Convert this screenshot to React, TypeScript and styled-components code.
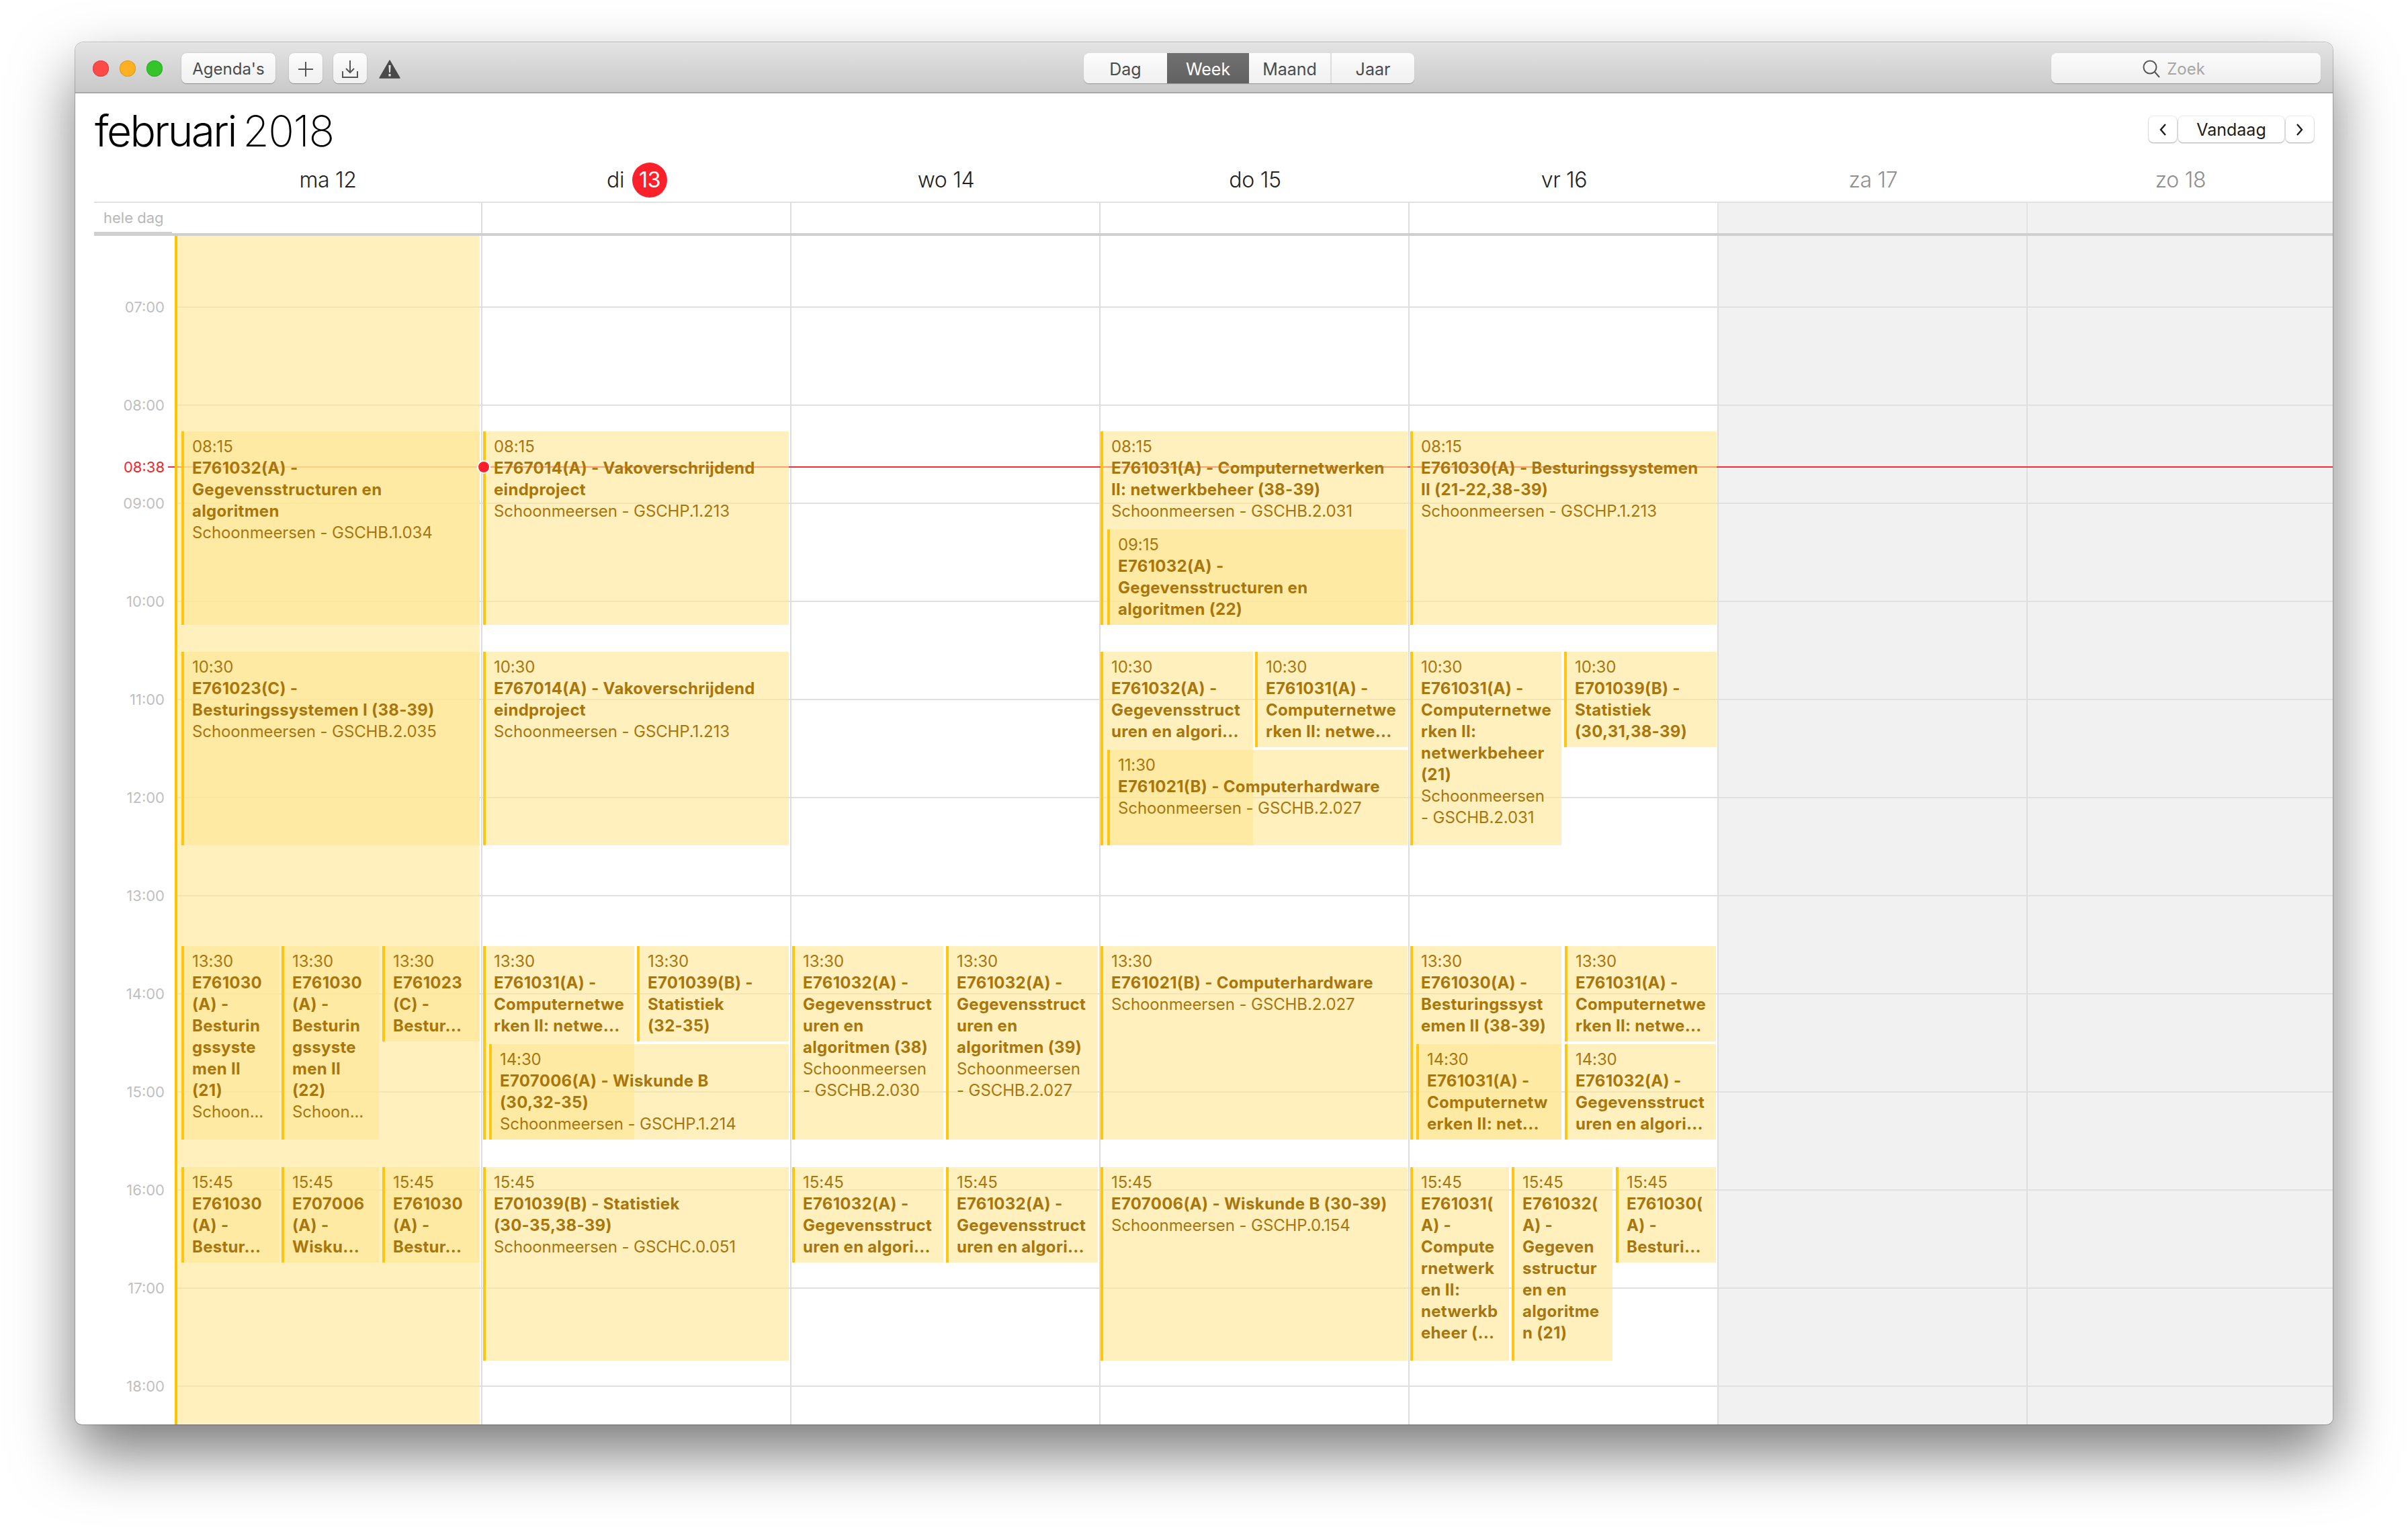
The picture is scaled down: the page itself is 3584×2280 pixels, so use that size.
import React from 'react'
import styled, { createGlobalStyle } from 'styled-components'

const HOUR = 146
// y of 00:00 measured from the top of the scrolling grid (grid starts at y=352 on the page)
const GRID_TOP = 352
const DAY_ZERO = 2063 - 18 * HOUR

type CalEvent = {
    from: string
    to: string
    left: number
    right: number
    title: string[]
    place?: string[]
}

type Day = {
    label: string
    num: string
    x: number
    events: CalEvent[]
}

const toY = (t: string, extra = 0) => {
    const [h, m] = t.split(':').map(Number)
    return Math.round(DAY_ZERO + (h + m / 60) * HOUR + extra)
}

const days: Day[] = [
    {
        label: 'ma',
        num: '12',
        x: 257,
        events: [
            { from: '08:15', to: '10:15', left: 270, right: 714, title: ['E761032(A) -', 'Gegevensstructuren en', 'algoritmen'], place: ['Schoonmeersen - GSCHB.1.034'] },
            { from: '10:30', to: '12:30', left: 270, right: 714, title: ['E761023(C) -', 'Besturingssystemen I (38-39)'], place: ['Schoonmeersen - GSCHB.2.035'] },
            { from: '13:30', to: '15:30', left: 270, right: 416, title: ['E761030', '(A) -', 'Besturin', 'gssyste', 'men II', '(21)'], place: ['Schoon...'] },
            { from: '13:30', to: '15:30', left: 419, right: 564, title: ['E761030', '(A) -', 'Besturin', 'gssyste', 'men II', '(22)'], place: ['Schoon...'] },
            { from: '13:30', to: '14:30', left: 569, right: 714, title: ['E761023', '(C) -', 'Bestur...'] },
            { from: '15:45', to: '16:45', left: 270, right: 416, title: ['E761030', '(A) -', 'Bestur...'] },
            { from: '15:45', to: '16:45', left: 419, right: 564, title: ['E707006', '(A) -', 'Wisku...'] },
            { from: '15:45', to: '16:45', left: 569, right: 714, title: ['E761030', '(A) -', 'Bestur...'] }
        ]
    },
    {
        label: 'di',
        num: '13',
        x: 717,
        events: [
            { from: '08:15', to: '10:15', left: 719, right: 1174, title: ['E767014(A) - Vakoverschrijdend', 'eindproject'], place: ['Schoonmeersen - GSCHP.1.213'] },
            { from: '10:30', to: '12:30', left: 719, right: 1174, title: ['E767014(A) - Vakoverschrijdend', 'eindproject'], place: ['Schoonmeersen - GSCHP.1.213'] },
            { from: '13:30', to: '15:30', left: 719, right: 944, title: ['E761031(A) -', 'Computernetwe', 'rken II: netwe...'] },
            { from: '13:30', to: '14:30', left: 948, right: 1174, title: ['E701039(B) -', 'Statistiek', '(32-35)'] },
            { from: '14:30', to: '15:30', left: 728, right: 1174, title: ['E707006(A) - Wiskunde B', '(30,32-35)'], place: ['Schoonmeersen - GSCHP.1.214'] },
            { from: '15:45', to: '17:45', left: 719, right: 1174, title: ['E701039(B) - Statistiek', '(30-35,38-39)'], place: ['Schoonmeersen - GSCHC.0.051'] }
        ]
    },
    {
        label: 'wo',
        num: '14',
        x: 1177,
        events: [
            { from: '13:30', to: '15:30', left: 1179, right: 1404, title: ['E761032(A) -', 'Gegevensstruct', 'uren en', 'algoritmen (38)'], place: ['Schoonmeersen', '- GSCHB.2.030'] },
            { from: '13:30', to: '15:30', left: 1408, right: 1634, title: ['E761032(A) -', 'Gegevensstruct', 'uren en', 'algoritmen (39)'], place: ['Schoonmeersen', '- GSCHB.2.027'] },
            { from: '15:45', to: '16:45', left: 1179, right: 1404, title: ['E761032(A) -', 'Gegevensstruct', 'uren en algori...'] },
            { from: '15:45', to: '16:45', left: 1408, right: 1634, title: ['E761032(A) -', 'Gegevensstruct', 'uren en algori...'] }
        ]
    },
    {
        label: 'do',
        num: '15',
        x: 1637,
        events: [
            { from: '08:15', to: '10:15', left: 1638, right: 2095, title: ['E761031(A) - Computernetwerken', 'II: netwerkbeheer (38-39)'], place: ['Schoonmeersen - GSCHB.2.031'] },
            { from: '09:15', to: '10:15', left: 1648, right: 2093, title: ['E761032(A) -', 'Gegevensstructuren en', 'algoritmen (22)'] },
            { from: '10:30', to: '12:30', left: 1638, right: 1865, title: ['E761032(A) -', 'Gegevensstruct', 'uren en algori...'] },
            { from: '10:30', to: '11:30', left: 1868, right: 2095, title: ['E761031(A) -', 'Computernetwe', 'rken II: netwe...'] },
            { from: '11:30', to: '12:30', left: 1648, right: 2095, title: ['E761021(B) - Computerhardware'], place: ['Schoonmeersen - GSCHB.2.027'] },
            { from: '13:30', to: '15:30', left: 1638, right: 2095, title: ['E761021(B) - Computerhardware'], place: ['Schoonmeersen - GSCHB.2.027'] },
            { from: '15:45', to: '17:45', left: 1638, right: 2095, title: ['E707006(A) - Wiskunde B (30-39)'], place: ['Schoonmeersen - GSCHP.0.154'] }
        ]
    },
    {
        label: 'vr',
        num: '16',
        x: 2097,
        events: [
            { from: '08:15', to: '10:15', left: 2099, right: 2555, title: ['E761030(A) - Besturingssystemen', 'II (21-22,38-39)'], place: ['Schoonmeersen - GSCHP.1.213'] },
            { from: '10:30', to: '12:30', left: 2099, right: 2324, title: ['E761031(A) -', 'Computernetwe', 'rken II:', 'netwerkbeheer', '(21)'], place: ['Schoonmeersen', '- GSCHB.2.031'] },
            { from: '10:30', to: '11:30', left: 2328, right: 2555, title: ['E701039(B) -', 'Statistiek', '(30,31,38-39)'] },
            { from: '13:30', to: '15:30', left: 2099, right: 2324, title: ['E761030(A) -', 'Besturingssyst', 'emen II (38-39)'] },
            { from: '13:30', to: '14:30', left: 2329, right: 2554, title: ['E761031(A) -', 'Computernetwe', 'rken II: netwe...'] },
            { from: '14:30', to: '15:30', left: 2108, right: 2324, title: ['E761031(A) -', 'Computernetw', 'erken II: net...'] },
            { from: '14:30', to: '15:30', left: 2329, right: 2554, title: ['E761032(A) -', 'Gegevensstruct', 'uren en algori...'] },
            { from: '15:45', to: '17:45', left: 2099, right: 2246, title: ['E761031(', 'A) -', 'Compute', 'rnetwerk', 'en II:', 'netwerkb', 'eheer (...'] },
            { from: '15:45', to: '17:45', left: 2250, right: 2400, title: ['E761032(', 'A) -', 'Gegeven', 'sstructur', 'en en', 'algoritme', 'n (21)'] },
            { from: '15:45', to: '16:45', left: 2405, right: 2554, title: ['E761030(', 'A) -', 'Besturi...'] }
        ]
    },
    { label: 'za', num: '17', x: 2557, events: [] },
    { label: 'zo', num: '18', x: 3017, events: [] }
]

const hours = ['07', '08', '09', '10', '11', '12', '13', '14', '15', '16', '17', '18']

// same tint stacks up when events overlap, and lets the grid lines and the red line show through
const EVENT_FILL = 'rgba(255, 231, 148, 0.62)'

const GlobalStyle = createGlobalStyle`
    html, body {
        margin: 0;
        background: #fff;
    }
    body {
        font-family: Inter, 'Liberation Sans', sans-serif;
        -webkit-font-smoothing: antialiased;
    }
`

const Page = styled.div`
    width: 3584px;
    height: 2280px;
    padding: 63px 112px 0;
    box-sizing: border-box;
    overflow: hidden;
`

const Win = styled.div`
    width: 3360px;
    height: 2057px;
    display: flex;
    flex-direction: column;
    overflow: hidden;
    background: #fff;
    border-radius: 12px 12px 10px 10px;
    box-shadow: 0 44px 90px rgba(0, 0, 0, 0.52), 0 0 0 1px rgba(0, 0, 0, 0.22);
`

const TitleBar = styled.div`
    position: relative;
    flex: none;
    height: 76px;
    box-sizing: border-box;
    display: flex;
    align-items: center;
    padding: 2px 18px 0 26px;
    background: linear-gradient(#e3e3e3, #c9c9c9);
    border-top: 1px solid #eee;
    border-bottom: 2px solid #a9a9a9;
`

const Lights = styled.div`
    display: flex;
    gap: 16px;
    margin-right: 28px;
`

const Light = styled.span<{ $fill: string; $edge: string }>`
    width: 24px;
    height: 24px;
    border-radius: 50%;
    background: ${(p) => p.$fill};
    box-shadow: inset 0 0 0 1px ${(p) => p.$edge};
`

const ToolButton = styled.div<{ $w: number; $gap?: number }>`
    width: ${(p) => p.$w}px;
    height: 45px;
    margin-right: ${(p) => p.$gap ?? 0}px;
    display: flex;
    align-items: center;
    justify-content: center;
    box-sizing: border-box;
    padding-top: 2px;
    border-radius: 8px;
    background: linear-gradient(#fcfcfc, #f0f0f0);
    box-shadow: 0 1px 1px rgba(0, 0, 0, 0.28), 0 0 0 1px rgba(0, 0, 0, 0.04);
    color: #4b4b4b;
    font-size: 24px;
`

const Warn = styled.svg`
    width: 32px;
    height: 28px;
    margin-left: 18px;
    margin-top: 2px;
`

const Segments = styled.div`
    position: absolute;
    left: 1501px;
    top: 15px;
    display: flex;
    height: 45px;
    border-radius: 8px;
    overflow: hidden;
    background: linear-gradient(#fcfcfc, #f0f0f0);
    box-shadow: 0 1px 1px rgba(0, 0, 0, 0.28);
`

const Segment = styled.div<{ $w: number; $on?: boolean; $line?: boolean }>`
    width: ${(p) => p.$w}px;
    display: flex;
    align-items: center;
    justify-content: center;
    padding-top: 2px;
    font-size: 25px;
    box-sizing: border-box;
    color: ${(p) => (p.$on ? '#fff' : '#4b4b4b')};
    background: ${(p) => (p.$on ? 'linear-gradient(#707070, #626262)' : 'none')};
    border-left: ${(p) => (p.$line ? '2px solid #dcdcdc' : 'none')};
`

const Search = styled.div`
    margin-left: auto;
    width: 401px;
    height: 45px;
    box-sizing: border-box;
    display: flex;
    align-items: center;
    justify-content: center;
    gap: 10px;
    padding: 2px 36px 0 0;
    border-radius: 8px;
    background: linear-gradient(#fbfbfb, #efefef);
    box-shadow: 0 1px 1px rgba(0, 0, 0, 0.28);
    color: #a6a6a6;
    font-size: 24px;
`

const Top = styled.div`
    flex: none;
    height: 97px;
    display: flex;
    align-items: flex-start;
    justify-content: space-between;
    padding: 0 28px 0 29px;
`

const Month = styled.h1`
    margin: 16px 0 0;
    font-size: 64px;
    line-height: 80px;
    font-weight: 300;
    color: #000;
    letter-spacing: -2.6px;
    span {
        margin-left: -5px;
        font-weight: 150;
        letter-spacing: -1.4px;
    }
`

const Nav = styled.div`
    display: flex;
    gap: 2px;
    margin-top: 34px;
`

const NavButton = styled.div<{ $w: number }>`
    width: ${(p) => p.$w}px;
    height: 39px;
    display: flex;
    align-items: center;
    justify-content: center;
    border-radius: 7px;
    background: #fff;
    box-shadow: 0 1px 2px rgba(0, 0, 0, 0.3), 0 0 0 1px rgba(0, 0, 0, 0.06);
    color: #1d1d1d;
    font-size: 25px;
`

const DayHeads = styled.div`
    flex: none;
    height: 64px;
    display: grid;
    grid-template-columns: 145px repeat(6, 460px) 455px;
    align-items: center;
`

const DayHead = styled.div<{ $muted?: boolean }>`
    display: flex;
    align-items: center;
    justify-content: center;
    gap: 12px;
    height: 64px;
    padding: 0 0 1px 2px;
    box-sizing: border-box;
    font-size: 32px;
    font-weight: 300;
    color: ${(p) => (p.$muted ? '#8f8f8f' : '#222')};
    letter-spacing: -0.3px;
`

const TodayBadge = styled.span`
    width: 52px;
    height: 52px;
    border-radius: 50%;
    background: #fb2029;
    color: #fff;
    display: flex;
    align-items: center;
    justify-content: center;
    font-weight: 400;
`

const AllDay = styled.div`
    flex: none;
    margin-left: 28px;
    height: 51px;
    box-sizing: border-box;
    display: grid;
    grid-template-columns: 117px repeat(6, 460px) 455px;
    border-top: 2px solid #e2e2e2;
    border-bottom: 6px solid #cfcfcf;
`

const AllDayLabel = styled.div`
    font-size: 22px;
    line-height: 45px;
    color: #b8b8b8;
    padding-left: 14px;
    white-space: nowrap;
`

const AllDayCell = styled.div<{ $weekend?: boolean; $first?: boolean }>`
    background: ${(p) => (p.$weekend ? '#f1f1f1' : '#fff')};
    border-left: 2px solid ${(p) => (p.$first ? 'transparent' : p.$weekend ? '#e4e4e4' : '#dedede')};
    margin-left: -1px;
`

const Grid = styled.div`
    position: relative;
    flex: 1;
    min-height: 0;
    overflow: hidden;
    display: grid;
    grid-template-columns: 145px repeat(6, 460px) 455px;
`

const Gutter = styled.div`
    position: relative;
`

const HourLabel = styled.div`
    position: absolute;
    right: 12px;
    height: 30px;
    line-height: 30px;
    font-size: 22px;
    color: #bfbfc1;
`

const NowLabel = styled(HourLabel)`
    color: #fb1f2c;
    background: #fff;
    padding-left: 6px;
    z-index: 3;
`

const DayCol = styled.div<{ $weekend?: boolean; $first?: boolean }>`
    position: relative;
    margin-left: -1px;
    border-left: 2px solid ${(p) => (p.$first ? 'transparent' : '#dedede')};
    background: ${(p) => (p.$weekend ? '#f1f1f1' : 'transparent')};
`

const Rule = styled.div<{ $inset?: boolean }>`
    position: absolute;
    left: ${(p) => (p.$inset ? 2 : 0)}px;
    right: 0;
    height: 2px;
    background: #e0e0e0;
`

const NowTick = styled.div`
    position: absolute;
    height: 2px;
    background: #fb2a34;
`

const NowDot = styled.div`
    position: absolute;
    width: 20px;
    height: 20px;
    box-sizing: border-box;
    border: 2px solid #fff;
    border-radius: 50%;
    background: #fb1f2c;
    z-index: 4;
`

const Backdrop = styled.div`
    position: absolute;
    left: 2px;
    right: 3px;
    top: 0;
    bottom: 0;
    border-left: 4px solid #ffc400;
    background: ${EVENT_FILL};
`

const EventBox = styled.div`
    position: absolute;
    box-sizing: border-box;
    padding: 7px 0 0 12px;
    border-left: 4px solid #ffc511;
    background: ${EVENT_FILL};
    overflow: hidden;
    color: #a9760c;
    font-size: 24px;
    line-height: 32px;
    white-space: nowrap;
    z-index: 2;
`

const EventLine = styled.div<{ $bold?: boolean }>`
    font-weight: ${(p) => (p.$bold ? 700 : 400)};
    letter-spacing: ${(p) => (p.$bold ? '0.3px' : '-0.1px')};
`

function Event({ ev, dayX }: { ev: CalEvent; dayX: number }) {
    const top = toY(ev.from, 3) - GRID_TOP
    const bottom = toY(ev.to, -1) - GRID_TOP
    return (
        <EventBox style={{ top, height: bottom - top, left: ev.left - dayX - 1, width: ev.right - ev.left }}>
            <EventLine>{ev.from}</EventLine>
            {ev.title.map((t, i) => (
                <EventLine $bold key={i}>
                    {t}
                </EventLine>
            ))}
            {ev.place?.map((t, i) => <EventLine key={i}>{t}</EventLine>)}
        </EventBox>
    )
}

export default function App() {
    const nowY = toY('08:38') - GRID_TOP
    return (
        <Page>
            <GlobalStyle />
            <Win>
                <TitleBar>
                    <Lights>
                        <Light $fill="#fc4a48" $edge="#e0403e" />
                        <Light $fill="#fdb122" $edge="#df9a1a" />
                        <Light $fill="#35c42a" $edge="#2dab24" />
                    </Lights>
                    <ToolButton $w={140} $gap={20}>
                        Agenda's
                    </ToolButton>
                    <ToolButton $w={50} $gap={16}>
                        <svg width="24" height="24" viewBox="0 0 24 24" fill="none" stroke="#555" strokeWidth="2">
                            <path d="M12 1v22M1 12h22" />
                        </svg>
                    </ToolButton>
                    <ToolButton $w={50}>
                        <svg width="24" height="28" viewBox="0 0 24 28" fill="none" stroke="#555" strokeWidth="2">
                            <path d="M12 1v18M6 13l6 6 6-6M1 17v9h22v-9" />
                        </svg>
                    </ToolButton>
                    <Warn viewBox="0 0 32 28">
                        <path d="M16 1l15 26H1z" fill="#4a4a4a" stroke="#4a4a4a" strokeLinejoin="round" strokeWidth="1.5" />
                        <path d="M14.4 8h3.2l-.7 11h-1.8zM14.4 21h3.2v3.4h-3.2z" fill="#e4e4e4" />
                    </Warn>
                    <Segments>
                        <Segment $w={124}>Dag</Segment>
                        <Segment $w={122} $on>
                            Week
                        </Segment>
                        <Segment $w={121}>Maand</Segment>
                        <Segment $w={125} $line>
                            Jaar
                        </Segment>
                    </Segments>
                    <Search>
                        <svg width="26" height="28" viewBox="0 0 26 28" fill="none" stroke="#555" strokeWidth="2">
                            <circle cx="11" cy="11" r="9.5" />
                            <path d="M18 18l7 8" />
                        </svg>
                        Zoek
                    </Search>
                </TitleBar>

                <Top>
                    <Month>
                        februari <span>2018</span>
                    </Month>
                    <Nav>
                        <NavButton $w={42}>
                            <svg width="12" height="20" viewBox="0 0 12 20" fill="none" stroke="#1d1d1d" strokeWidth="2.4">
                                <path d="M10 2L3 10l7 8" />
                            </svg>
                        </NavButton>
                        <NavButton $w={158}>Vandaag</NavButton>
                        <NavButton $w={42}>
                            <svg width="12" height="20" viewBox="0 0 12 20" fill="none" stroke="#1d1d1d" strokeWidth="2.4">
                                <path d="M2 2l7 8-7 8" />
                            </svg>
                        </NavButton>
                    </Nav>
                </Top>

                <DayHeads>
                    <div />
                    {days.map((d) => (
                        <DayHead key={d.num} $muted={d.label === 'za' || d.label === 'zo'}>
                            {d.label === 'di' ? (
                                <>
                                    {d.label}
                                    <TodayBadge>{d.num}</TodayBadge>
                                </>
                            ) : (
                                `${d.label} ${d.num}`
                            )}
                        </DayHead>
                    ))}
                </DayHeads>

                <AllDay>
                    <AllDayLabel>hele dag</AllDayLabel>
                    {days.map((d, i) => (
                        <AllDayCell key={d.num} $first={i === 0} $weekend={i > 4} />
                    ))}
                </AllDay>

                <Grid>
                    <Gutter>
                        {hours.map((h) => (
                            <HourLabel key={h} style={{ top: toY(`${h}:00`) - GRID_TOP - 14 }}>
                                {h}:00
                            </HourLabel>
                        ))}
                        <NowLabel style={{ top: nowY - 14 }}>08:38</NowLabel>
                        <NowTick style={{ top: nowY, left: 138, right: 0 }} />
                    </Gutter>
                    {days.map((d, i) => (
                        <DayCol key={d.num} $first={i === 0} $weekend={i > 4}>
                            {hours.map((h) => (
                                <Rule key={h} $inset={i === 0} style={{ top: toY(`${h}:00`) - GRID_TOP }} />
                            ))}
                            <NowTick style={{ top: nowY, left: -2, right: 0 }} />
                            {i === 0 && <Backdrop />}
                            {i === 1 && <NowDot style={{ top: nowY - 9, left: -8 }} />}
                            {d.events.map((ev, k) => (
                                <Event key={k} ev={ev} dayX={d.x} />
                            ))}
                        </DayCol>
                    ))}
                </Grid>
            </Win>
        </Page>
    )
}
